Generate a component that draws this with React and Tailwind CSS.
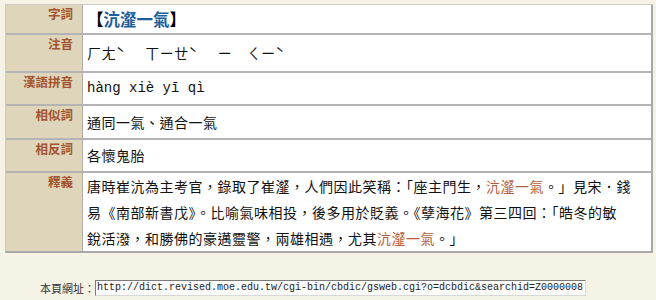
import React from "react";

const cjk = { fontFamily: '"Noto Sans CJK TC", "Noto Sans", sans-serif' };
const mono = { fontFamily: '"Liberation Mono", "DejaVu Sans Mono", monospace' };

function Row({ label, h, children, first }) {
  return (
    <div
      className={
        "flex " + (first ? "" : "border-t-2 border-[#b4b4b4]")
      }
    >
      <div
        className="w-[77px] shrink-0 bg-[#ded5bb] border-r border-[#b2ad9f] text-right pr-[9px] pt-[2px] text-[12.5px] leading-[14px] font-bold text-[#a2532f]"
        style={{ ...cjk, height: h }}
      >
        {label}
      </div>
      <div
        className="flex-1 bg-white flex items-center pl-[4px] pr-[8px] text-[#111]"
        style={{ height: h }}
      >
        {children}
      </div>
    </div>
  );
}

const bopo = ["ㄏ", "ㄤ", "ˋ", "　", "ㄒ", "ㄧ", "ㄝ", "ˋ", "　", "ㄧ", "　", "ㄑ", "ㄧ", "ˋ"];

export default function App() {
  const hl = "text-[#b65e3c]";
  return (
    <div className="min-h-[300px] w-[656px] bg-[#f5f2e6] pt-[4px] pl-[5px]" style={cjk}>
      <div className="w-[648px] border border-[#cfcbc0] border-r-2 border-b-2 border-r-[#a8a8a8] border-b-[#a8a8a8]">
        <Row label="字詞" h={28} first>
          <span className="text-[16.5px] font-bold leading-none">
            <span className="text-black">【</span>
            <span className="text-[#1d5e9c]">沆瀣一氣</span>
            <span className="text-black">】</span>
          </span>
        </Row>
        <Row label="注音" h={36}>
          <span className="flex text-[14.5px] leading-none">
            {bopo.map((c, i) => (
              <span key={i} className="inline-block w-[14.5px]">
                {c}
              </span>
            ))}
          </span>
        </Row>
        <Row label="漢語拼音" h={31}>
          <span className="text-[14px]" style={mono}>
            hàng xiè yī qì
          </span>
        </Row>
        <Row label="相似詞" h={32}>
          <span className="text-[14px] tracking-[0.5px]">通同一氣、通合一氣</span>
        </Row>
        <Row label="相反詞" h={31}>
          <span className="text-[14px] tracking-[0.5px]">各懷鬼胎</span>
        </Row>
        <Row label="釋義" h={78}>
          <div className="text-[14px] leading-[26px] tracking-[0.5px] whitespace-nowrap">
            唐時崔沆為主考官，錄取了崔瀣，人們因此笑稱：「座主門生，
            <span className={hl}>沆瀣一氣</span>。」見宋．錢
            <br />
            易《南部新書戊》。比喻氣味相投，後多用於貶義。《孽海花》第三四回：「皓冬的敏
            <br />
            銳活潑，和勝佛的豪邁靈警，兩雄相遇，尤其<span className={hl}>沆瀣一氣</span>。」
          </div>
        </Row>
      </div>
      <div className="flex items-center mt-[27px] pl-[35px]">
        <span className="text-[11px] leading-[16px] text-[#333]">本頁網址：</span>
        <div
          className="w-[491px] shrink-0 h-[16px] overflow-hidden bg-[#fcfcfa] border-l border-t border-[#7a7a7a] border-r border-b border-r-[#d8d8d8] border-b-[#d8d8d8] pl-[1px] text-[10px] leading-[14px] text-[#222] whitespace-nowrap"
          style={mono}
        >
          {"http://dict.revised.moe.edu.tw/cgi-bin/cbdic/gsweb.cgi?o=dcbdic&searchid=Z0000008"}
        </div>
      </div>
    </div>
  );
}
